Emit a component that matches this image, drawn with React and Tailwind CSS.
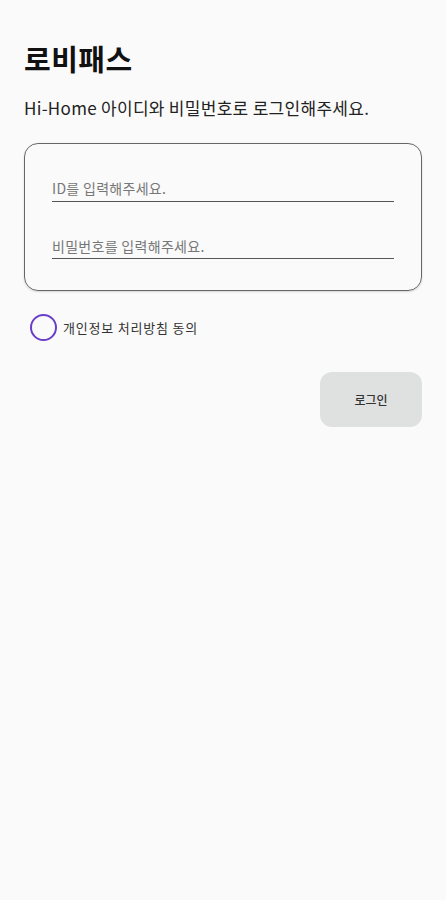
export default function App() {
  return (
    <div
      className="min-h-[900px] w-full bg-[#fafafa] text-[#111] px-6 pt-[38px]"
      style={{ fontFamily: '"Noto Sans CJK KR", "Noto Sans", sans-serif' }}
    >
      <h1 className="text-[29px] font-bold leading-[40px] tracking-[0.5px]">로비패스</h1>
      <p className="mt-[19px] text-[17px] leading-[22px] tracking-[0.3px] text-[#222]">
        Hi-Home 아이디와 비밀번호로 로그인해주세요.
      </p>

      <div className="mt-[24px] h-[148px] rounded-[14px] border border-[#666] px-[27px] pt-[31px] shadow-[0_1px_2px_rgba(0,0,0,0.15)]">
        <div className="border-b border-[#555] pb-[2px]">
          <input
            className="w-full bg-transparent text-[14px] leading-[22px] tracking-[0.3px] text-[#333] outline-none placeholder:text-[#777]"
            placeholder="ID를 입력해주세요."
          />
        </div>
        <div className="mt-[31px] border-b border-[#555] pb-[1px]">
          <input
            type="password"
            className="w-full bg-transparent text-[14px] leading-[22px] tracking-[0.3px] text-[#333] outline-none placeholder:text-[#777]"
            placeholder="비밀번호를 입력해주세요."
          />
        </div>
      </div>

      <label className="mt-[23px] flex items-center gap-[6px] pl-[6px]">
        <span className="h-[27px] w-[27px] rounded-full border-2 border-[#6a3fc8]" />
        <span className="text-[13px] tracking-[0.8px] text-[#333]">개인정보 처리방침 동의</span>
      </label>

      <div className="mt-[31px] flex justify-end">
        <button className="h-[55px] w-[102px] rounded-[12px] bg-[#dfe0e0] text-[12px] font-medium text-[#333]">
          로그인
        </button>
      </div>
    </div>
  );
}
